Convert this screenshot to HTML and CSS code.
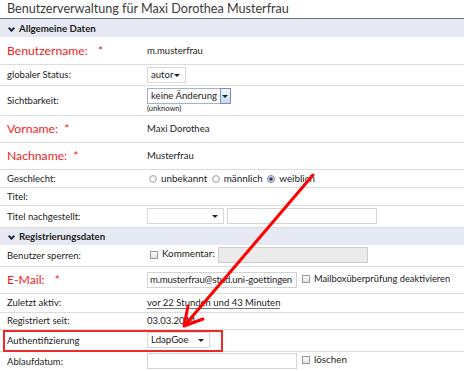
FILE: index.html
```html
<!DOCTYPE html>
<html>
<head lang="de">
    <meta charset="UTF-8">
    <title>Benutzerverwaltung</title>
    <link rel="stylesheet" href="styles.css">
</head>
<body>
<h1 class="title">Benutzerverwaltung für Maxi Dorothea Musterfrau</h1>

<table class="form">
    <colgroup>
        <col class="c-label">
        <col>
    </colgroup>
    <tr class="section">
        <td colspan="2"><span class="chev"></span>Allgemeine Daten</td>
    </tr>
    <tr class="big">
        <td class="req">Benutzername: <span class="wide">*</span></td>
        <td>m.musterfrau</td>
    </tr>
    <tr class="r21">
        <td>globaler Status:</td>
        <td><span class="sel sel-status">autor<i class="tri"></i></span></td>
    </tr>
    <tr class="r30">
        <td>Sichtbarkeit:</td>
        <td>
            <span class="sel sel-vis">keine Änderung<b class="btn"><i class="tri"></i></b></span>
            <div class="hint">(unknown)</div>
        </td>
    </tr>
    <tr class="big">
        <td class="req">Vorname: <span>*</span></td>
        <td>Maxi Dorothea</td>
    </tr>
    <tr class="big">
        <td class="req">Nachname: <span>*</span></td>
        <td>Musterfrau</td>
    </tr>
    <tr class="r18">
        <td>Geschlecht:</td>
        <td class="radios">
            <span class="radio"></span>unbekannt
            <span class="radio"></span>männlich
            <span class="radio on"></span>weiblich
        </td>
    </tr>
    <tr class="r18">
        <td>Titel:</td>
        <td></td>
    </tr>
    <tr class="r22">
        <td>Titel nachgestellt:</td>
        <td><span class="sel sel-titel"><i class="tri"></i></span><span class="inp inp-titel"></span></td>
    </tr>
    <tr class="section sec2">
        <td colspan="2"><span class="chev"></span>Registrierungsdaten</td>
    </tr>
    <tr class="r21">
        <td>Benutzer sperren:</td>
        <td class="lock"><span class="check"></span>Kommentar: <span class="inp inp-off"></span></td>
    </tr>
    <tr class="big">
        <td class="req">E-Mail: <span class="wide">*</span></td>
        <td><span class="inp inp-mail">m.musterfrau@stud.uni-goettingen</span><span class="check"></span><span class="mailbox">Mailboxüberprüfung deaktivieren</span></td>
    </tr>
    <tr class="r19">
        <td>Zuletzt aktiv:</td>
        <td><span class="dotted">vor 22 Stunden und 43 Minuten</span></td>
    </tr>
    <tr class="r17">
        <td>Registriert seit:</td>
        <td>03.03.2014</td>
    </tr>
    <tr class="r22">
        <td>Authentifizierung</td>
        <td><span class="sel sel-auth">LdapGoe<i class="tri"></i></span></td>
    </tr>
    <tr class="r20">
        <td>Ablaufdatum:</td>
        <td class="lock"><span class="inp inp-date"></span><span class="check"></span>löschen</td>
    </tr>
</table>

<div class="mark"></div>
<svg class="arrow" width="464" height="371" viewBox="0 0 464 371">
    <line x1="313" y1="175" x2="185" y2="325" stroke="#f00" stroke-width="3" stroke-linecap="round"/>
    <polyline points="188,306 184,326 203,319" fill="none" stroke="#f00" stroke-width="3" stroke-linecap="round" stroke-linejoin="round"/>
</svg>
</body>
</html>
```

FILE: styles.css
```css
* {
    margin: 0;
    padding: 0;
    box-sizing: border-box;
}

body {
    font-family: Lato, "Liberation Sans", sans-serif;
    font-size: 9.5px;
    color: #222;
    background: #fff;
    position: relative;
    width: 464px;
    height: 371px;
    overflow: hidden;
}

.title {
    font-weight: normal;
    font-size: 12.6px;
    color: #3a3a3a;
    padding-left: 7px;
    height: 19px;
    line-height: 17px;
    border-bottom: 1px solid #5d7291;
}

.form {
    width: 100%;
    border-collapse: collapse;
    table-layout: fixed;
}

.c-label {
    width: 147px;
}

.form td {
    border-bottom: 1px solid #dcdcdc;
    padding: 0 0 0 7px;
    vertical-align: middle;
    white-space: nowrap;
}

.form td + td {
    padding-left: 0;
}

.section td {
    background: #e6e9f1;
    height: 18px;
    font-weight: bold;
    font-size: 9.7px;
    border-bottom: none;
    padding-left: 8px;
}

.sec2 td {
    border-top: 1px solid #5d7291;
}

.chev {
    display: inline-block;
    width: 5px;
    height: 5px;
    border-right: 2px solid #1f3352;
    border-bottom: 2px solid #1f3352;
    transform: rotate(45deg);
    margin: 0 5px 3px 1px;
    vertical-align: middle;
}

.big td {
    height: 27px;
}

.form .req {
    color: #f21d1d;
    font-size: 12.2px;
}

.req span {
    margin-left: 3px;
}

.req .wide {
    margin-left: 7px;
}

.r17 td { height: 17px; }
.r18 td { height: 18px; }
.r19 td { height: 19px; }
.r20 td { height: 20px; }
.r21 td { height: 21px; }
.r22 td { height: 22px; }
.r30 td { height: 30px; }

.sel {
    display: inline-block;
    position: relative;
    height: 16px;
    line-height: 14px;
    border: 1px solid #d8d8d8;
    padding-left: 3px;
    font-size: 9.6px;
    vertical-align: middle;
    background: #fff;
}

.tri {
    position: absolute;
    right: 5px;
    top: 6px;
    border-left: 3px solid transparent;
    border-right: 3px solid transparent;
    border-top: 3px solid #222;
}

.sel-status { width: 39px; }
.sel-titel { width: 77px; }
.sel-auth { width: 63px; }

.sel-vis {
    width: 84px;
    border-color: #9db4d4;
    margin-top: 2px;
}

.btn {
    position: absolute;
    right: -1px;
    top: -1px;
    width: 11px;
    height: 16px;
    border: 1px solid #6f90c0;
    background: linear-gradient(#f4f7fb, #c9d7ea);
}

.btn .tri {
    right: 2px;
}

.hint {
    font-size: 7.5px;
    line-height: 10px;
    margin-bottom: 1px;
}

.inp {
    display: inline-block;
    height: 16px;
    line-height: 14px;
    border: 1px solid #d4d4d4;
    vertical-align: middle;
    padding-left: 2px;
    overflow: hidden;
    background: #fff;
}

.inp-titel {
    width: 150px;
    margin-left: 3px;
}

.lock {
    font-size: 9.8px;
}

.inp-off {
    width: 150px;
    height: 16px;
    margin-left: 1px;
    background: #ebebeb;
    border-color: #cdcdcd;
}

.inp-mail {
    width: 150px;
    margin-right: 5px;
    font-size: 9.6px;
    letter-spacing: -0.15px;
}

.mailbox {
    font-size: 9.3px;
}

.inp-date {
    width: 150px;
    margin-right: 5px;
}

.radios {
    font-size: 9.9px;
}

.radio {
    display: inline-block;
    width: 8px;
    height: 8px;
    border-radius: 50%;
    border: 1px solid #b0b0b0;
    background: radial-gradient(#fff, #d8d8d8);
    margin: 0 4px 0 2px;
    vertical-align: -1px;
}

.radio.on {
    background: radial-gradient(#1e3f73 25%, #9fb2cc 45%, #eee 70%);
    border-color: #888;
}

.check {
    display: inline-block;
    width: 8px;
    height: 8px;
    border: 1px solid #999;
    background: linear-gradient(#fff, #e0e0e0);
    margin: 0 4px 0 3px;
    vertical-align: -1px;
}

.inp + .check {
    margin-left: 0;
}

.dotted {
    border-bottom: 1px solid #777;
}

.mark {
    position: absolute;
    left: 3px;
    top: 330px;
    width: 220px;
    height: 22px;
    border: 2px solid #ec2a2a;
}

.arrow {
    position: absolute;
    left: 0;
    top: 0;
}
```
